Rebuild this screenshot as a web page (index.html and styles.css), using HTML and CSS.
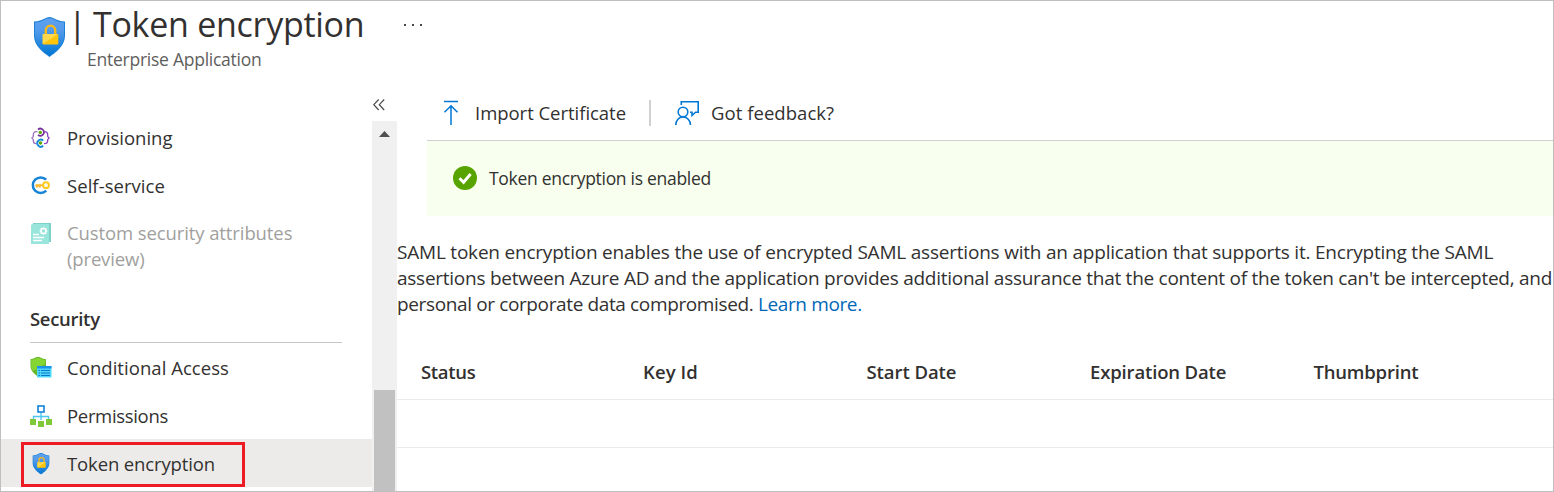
FILE: index.html
```html
<!DOCTYPE html>
<html lang="en">
<head>
<meta charset="utf-8">
<title>Token encryption</title>
<link rel="stylesheet" href="styles.css">
</head>
<body>
<svg class="defs" aria-hidden="true">
  <defs>
    <linearGradient id="blue" x1="0" y1="0" x2="0" y2="1"><stop offset="0" stop-color="#5ea0ef"/><stop offset=".3" stop-color="#559cec"/><stop offset="1" stop-color="#0078d4"/></linearGradient>
    <symbol id="shield" viewBox="0 0 31 40">
      <path d="M15.500 0C20 0 21 4 31 4.500V19C31 29 21 36 15.500 40C10 36 0 29 0 19V4.500C10 4 11 0 15.500 0Z" fill="#1a7fd6"/>
      <path d="M15.500 1.200C20 1.200 22 5 30 5.500V19C30 28 21 35 15.500 38.800C10 35 1 28 1 19V5.500C9 5 11 1.200 15.500 1.200Z" fill="url(#blue)"/>
      <path d="M11.800 18V13.300a4.700 4.700 0 0 1 9.400 0V18" fill="none" stroke="#fdb913" stroke-width="2.400"/>
      <rect x="8.700" y="17" width="15.600" height="10.500" rx=".8" fill="#ffc50a"/>
      <path d="M8.700 17H24L8.700 27Z" fill="#ffd84d"/>
    </symbol>
  </defs>
</svg>
<div class="blade">
  <header class="header">
    <svg class="header-icon" viewBox="0 0 31 40"><use href="#shield"/></svg>
    <div class="heading">
      <h1 class="title"><span class="bar">|</span><span>Token encryption</span></h1>
      <div class="subtitle">Enterprise Application</div>
    </div>
    <div class="more"><i></i><i></i><i></i></div>
  </header>
  <div class="body">
    <nav class="sidebar">
      <a class="item">
        <svg class="icon" viewBox="0 0 22 22" fill="none">
          <path d="M7.500 4.700H6.200C4.200 4.700 3.300 6 3.300 7.800V9.300C3.300 10.300 2 10.300 2 11S3.300 11.700 3.300 12.700V13.500C3.300 15.500 4.300 16.700 6 16.700" stroke="#9b70bd" stroke-width="1.300"/>
          <path d="M14.500 4.700C17 4.700 17.700 6 17.700 7.800V9.300C17.700 10.300 19 10.300 19 11S17.700 11.700 17.700 12.700V13.500C17.700 15.500 16.700 16.700 14 16.700" stroke="#8a3fc0" stroke-width="1.300"/>
          <path d="M8 2.600A3.500 3.500 0 1 1 8 7.800" stroke="#76309b" stroke-width="1.700"/>
          <path d="M13.200 13.600A3.500 3.500 0 1 0 13.200 18.800" stroke="#1687d9" stroke-width="1.900"/>
          <circle cx="10.300" cy="5.400" r="1.700" fill="#5ba500"/><circle cx="10.500" cy="16" r="1.700" fill="#5ba500"/>
        </svg>
        <span class="label provisioning">Provisioning</span>
      </a>
      <a class="item">
        <svg class="icon" viewBox="0 0 22 22" fill="none">
          <path d="M16.200 4.700A7.800 7.800 0 1 0 16.200 15.700" stroke="#1784d8" stroke-width="2.500"/>
          <path d="M13.500 10.200H5.500M7 10v2.500M9.700 10V12.500" stroke="#fdb62b" stroke-width="2"/>
          <circle cx="16" cy="10.200" r="2.900" stroke="#ffca20" stroke-width="2"/>
        </svg>
        <span class="label self">Self-service</span>
      </a>
      <a class="item tall disabled">
        <svg class="icon" viewBox="0 0 22 22">
          <path d="M3 1H21V20H3Z" fill="#7fd0c8"/><path d="M2 2H19V22H1V3Z" fill="#98e5dc"/>
          <path d="M3 12.500H9M3 15.500H14M3 18.500H12" stroke="#fff" stroke-width="1.300"/>
          <circle cx="13.500" cy="9" r="2.500" fill="none" stroke="#fff" stroke-width="1.500"/>
          <path d="M13.500 5v1.500M13.500 11.500V13M9.500 9H11M16 9h1.500M10.700 6.200l1 1M15.300 10.800l1 1M16.300 6.200l-1 1M11.700 10.800l-1 1" stroke="#fff" stroke-width="1.200"/>
        </svg>
        <span class="label"><span class="custom">Custom security attributes</span><br><span class="preview">(preview)</span></span>
      </a>
      <h2 class="section">Security</h2>
      <a class="item lower">
        <svg class="icon" viewBox="0 0 22 22">
          <path d="M8 0C11 0 12 2 16 2.300V9C16 14 11 17.500 8 19.500C5 17.500 .5 14 .5 9V2.300C4 2 5 0 8 0Z" fill="#69b52b"/>
          <path d="M8 1C11 1 12 2.800 15.300 3V7L3 14C1.800 12.500 1.200 11 1.200 9V3C4 2.700 5.500 1 8 1Z" fill="#86d633"/>
          <path d="M7 9H21.500V20.500H7Z" fill="#50d8fb"/><path d="M7 9H21.500V11.500H7Z" fill="#1b93eb"/>
          <path d="M8.500 13.500h1.500M8.500 16h1.500M8.500 18.500h1.500M11 13.500h9M11 16h9M11 18.500h9" stroke="#0877ce" stroke-width="1.100"/>
        </svg>
        <span class="label conditional">Conditional Access</span>
      </a>
      <a class="item lower">
        <svg class="icon" viewBox="0 0 22 22">
          <path d="M11 7.500V15M3.500 15V11.500H18.500V15" fill="none" stroke="#50c7ee" stroke-width="1.400"/>
          <rect x="8" y="1" width="6" height="6" fill="#fff" stroke="#1282da" stroke-width="1.600"/>
          <path d="M0 14H6V20H0ZM8 16H14V22H8ZM16 14H22V20H16Z" fill="#7fc83a"/>
        </svg>
        <span class="label permissions">Permissions</span>
      </a>
      <a class="item lower selected">
        <svg class="icon" viewBox="0 0 22 22"><use href="#shield" x="1" y="0" width="20" height="21.500"/></svg>
        <span class="label token">Token encryption</span>
        <span class="highlight"></span>
      </a>
    </nav>
    <div class="rail">
      <svg class="collapse" viewBox="0 0 12 12" fill="none" stroke="#484644" stroke-width="1.150"><path d="M5.700 .5L.8 5.700L5.700 11M11.200 .5L6.300 5.700L11.200 11"/></svg>
      <div class="track"><div class="arrow"></div><div class="thumb"></div></div>
    </div>
    <main class="main">
      <div class="toolbar">
        <svg class="import" viewBox="0 0 16 26" fill="none" stroke="#0078d4" stroke-width="1.500"><path d="M1 1.500H15M8 25V6M1.500 12.200L8 5.800L14.500 12.200"/></svg>
        <span class="command cert">Import Certificate</span>
        <span class="divider"></span>
        <svg class="feedback" viewBox="0 0 24 24" fill="none" stroke="#0078d4" stroke-width="1.600"><circle cx="8" cy="11" r="4.800"/><path d="M.8 24C.8 19.500 4 15.900 8 15.900S15.500 19.500 15.500 24M6.300 4V.8H23.200V11.200H20.500L17 14.500V11.200H15"/></svg>
        <span class="command got">Got feedback?</span>
      </div>
      <div class="banner">
        <svg class="check" viewBox="0 0 24 24"><circle cx="12" cy="12" r="12" fill="#57a300"/><path d="M6.500 12.300L10.600 16.300L17.600 8" fill="none" stroke="#fff" stroke-width="2.900"/></svg>
        <span class="enabled">Token encryption is enabled</span>
      </div>
      <p class="description">
        <span class="l1">SAML token encryption enables the use of encrypted SAML assertions with an application that supports it. Encrypting the SAML</span><br>
        <span class="l2">assertions between Azure AD and the application provides additional assurance that the content of the token can't be intercepted, and</span><br>
        <span class="l3">personal or corporate data compromised. <a class="link">Learn more.</a></span>
      </p>
      <div class="table">
        <div class="row head"><span class="c1">Status</span><span class="c2">Key Id</span><span class="c3">Start Date</span><span class="c4">Expiration Date</span><span class="c5">Thumbprint</span></div>
        <div class="row"></div>
      </div>
    </main>
  </div>
</div>
</body>
</html>
```
FILE: styles.css
```css
* { box-sizing: border-box; }
body { margin: 0; background: #fff; color: #323130; font: 18.5px/26px "Open Sans", "Noto Sans", sans-serif; white-space: nowrap; }
svg { display: block; flex: none; }
.defs { position: absolute; width: 0; height: 0; }
.blade { width: 1554px; height: 492px; border: 1px solid #bfbfbf; overflow: hidden; }

.header { display: flex; height: 84px; padding-left: 33px; }
.header-icon { width: 31px; height: 40px; margin-top: 16px; }
.heading { width: 309px; padding-left: 3px; }
.title { display: flex; margin: 0; font-size: 34px; line-height: 47px; font-weight: 400; letter-spacing: -.28px; }
.bar { width: 25px; }
.subtitle { padding-left: 19px; font-size: 17.5px; line-height: 22px; color: #605e5c; letter-spacing: -.25px; }
.more { display: flex; gap: 6px; padding: 23px 0 0 30px; }
.more i { width: 2px; height: 2px; background: #484644; }

.body { display: flex; height: 406px; }
.sidebar { width: 371px; padding-top: 29px; }
.item { position: relative; display: flex; align-items: center; height: 48px; padding-left: 29px; gap: 15px; }
.icon { width: 22px; height: 22px; }
.tall { height: 78px; align-items: flex-start; padding-top: 10px; }
.tall .icon { margin-top: 2px; }
.lower { padding-top: 2px; }
.disabled { color: #a19f9d; }
.section { width: 312px; height: 55px; margin: 0 0 0 29px; padding-top: 18px; font-size: 18.5px; line-height: 26px; font-weight: 600; letter-spacing: -.3px; border-bottom: 1px solid #c8c6c4; }
.selected { background: #edebe9; }
.highlight { position: absolute; left: 20px; top: 3px; width: 224px; height: 45px; border: 3px solid #ed1c24; }

.rail { display: flex; flex-direction: column; width: 25px; }
.collapse { width: 12px; height: 12px; margin: 14px 0 10px 1px; }
.track { flex: 1; background: #f0f0f0; padding: 10px 2px 0; }
.arrow { width: 11px; height: 6px; margin: 0 auto; background: #505050; clip-path: polygon(50% 0, 100% 100%, 0 100%); }
.thumb { height: 102px; margin-top: 253px; background: #c1c1c1; }

.main { flex: 1; min-width: 0; }
.toolbar { display: flex; align-items: center; height: 56px; margin-left: 30px; padding-left: 16px; border-bottom: 1px solid #d2d0ce; }
.import { width: 16px; height: 26px; margin-right: 16px; }
.cert { width: 174px; }
.divider { width: 2px; height: 26px; margin-right: 24px; background: #d2d0ce; }
.feedback { width: 24px; height: 24px; margin-right: 12px; }
.banner { display: flex; align-items: center; height: 75px; margin-left: 30px; padding: 0 0 2px 26px; gap: 12px; background: #f8ffef; font-size: 17.5px; }
.check { width: 24px; height: 24px; }
.description { margin: 23px 0 42px; font-size: 19px; }
.link { color: #0067b8; }
.row { height: 48px; border-bottom: 1px solid #edebe9; }
.head { display: grid; grid-template-columns: 222px 223.500px 223.500px 223.500px 1fr; height: 41px; padding-left: 24px; font-weight: 600; }

.provisioning { letter-spacing: -.03px; }
.self { letter-spacing: .05px; }
.custom { letter-spacing: -.1px; }
.preview { letter-spacing: -.15px; }
.conditional { letter-spacing: .05px; }
.permissions { letter-spacing: -.32px; }
.token { letter-spacing: -.13px; }
.cert { letter-spacing: -.03px; }
.got { letter-spacing: .05px; }
.enabled { letter-spacing: -.29px; }
.l1 { letter-spacing: -.21px; }
.l2 { letter-spacing: -.26px; }
.l3 { letter-spacing: -.37px; }
.c1 { letter-spacing: -.32px; }
.c2 { letter-spacing: .1px; }
.c3 { letter-spacing: -.07px; }
.c4 { letter-spacing: -.15px; }
.c5 { letter-spacing: -.2px; }
```
